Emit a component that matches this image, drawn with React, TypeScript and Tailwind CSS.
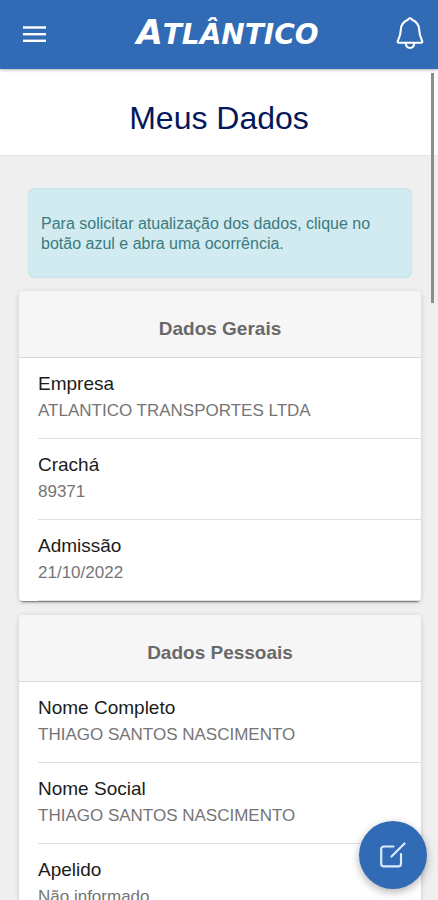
type Field = {
  label: string;
  value: string;
};

const generalData: Field[] = [
  { label: "Empresa", value: "ATLANTICO TRANSPORTES LTDA" },
  { label: "Crachá", value: "89371" },
  { label: "Admissão", value: "21/10/2022" },
];

const personalData: Field[] = [
  { label: "Nome Completo", value: "THIAGO SANTOS NASCIMENTO" },
  { label: "Nome Social", value: "THIAGO SANTOS NASCIMENTO" },
  { label: "Apelido", value: "Não informado" },
];

export default function App() {
  return (
    <div className="relative flex h-screen flex-col overflow-hidden bg-[#efefef] font-['Liberation_Sans',Arial,sans-serif]">
      <Header />

      <main className="min-h-0 flex-1 overflow-y-auto [scrollbar-width:none]">
        <div className="border-b border-[#e4e4e4] bg-white pt-[27px] pb-[15px]">
          <h1 className="text-center text-[32px] leading-[44px] text-[#04185c]">Meus Dados</h1>
        </div>

        <div className="pt-8 pr-[17px] pb-24 pl-[19px]">
          <p
            className="mx-[9px] rounded-md border border-[#c4e7ea] bg-[#d1ebf0] px-3 pt-[25px] pb-[23px] text-base leading-5 text-[#3c7a80]"
            role="status"
          >
            Para solicitar atualização dos dados, clique no botão azul e abra uma ocorrência.
          </p>

          <div className="mt-[13px] space-y-[14px]">
            <DataCard fields={generalData} title="Dados Gerais" />
            <DataCard fields={personalData} title="Dados Pessoais" />
          </div>
        </div>
      </main>

      {/* scroll indicator */}
      <div className="absolute top-[73px] right-1 h-[230px] w-[3px] bg-[#8c8c8c]" />

      <button
        aria-label="Abrir ocorrência"
        className="absolute right-[11px] bottom-[11px] flex size-[68px] items-center justify-center rounded-full bg-[#316ab5] text-[#dceaff] shadow-[0_3px_8px_rgba(0,0,0,0.3)]"
        type="button"
      >
        <EditIcon />
      </button>
    </div>
  );
}

function Header() {
  return (
    <header className="z-10 flex h-[69px] shrink-0 items-center justify-between bg-[#316ab5] pr-[14px] pl-[23px] text-white shadow-[0_1px_3px_rgba(0,0,0,0.3)]">
      <button aria-label="Menu" className="flex w-9 items-center" type="button">
        <svg fill="currentColor" height="17" viewBox="0 0 24 17" width="24">
          <rect height="2.4" width="23" y="0.3" />
          <rect height="2.4" width="23" y="7" />
          <rect height="2.4" width="23" y="13.6" />
        </svg>
      </button>
      <span className="pb-0.5 font-['DejaVu_Sans',Verdana,sans-serif] text-[28px] leading-8 font-bold italic">
        <span className="text-[34px]">A</span>TLÂNTICO
      </span>
      <button aria-label="Notificações" className="pb-1" type="button">
        <BellIcon />
      </button>
    </header>
  );
}

function BellIcon() {
  return (
    <svg fill="none" height="34" stroke="currentColor" strokeLinejoin="round" strokeWidth="2.1" viewBox="0 0 28 34" width="28">
      <path d="M14 2.2c-1 0-1.600.5-2.100 1.500C8 5.500 5.200 8.500 4.900 13c-.3 5.500-.8 7.500-2.700 11-.9 1.400-.7 2.700.8 2.700h22c1.500 0 1.700-1.300.8-2.700-1.900-3.500-2.400-5.500-2.700-11-.3-4.500-3.100-7.500-7-9.300-.5-1-1.100-1.500-2.100-1.500z" />
      <path d="M9.700 27c.3 3.200 1.900 5 4.300 5s4-1.800 4.300-5" />
    </svg>
  );
}

function EditIcon() {
  return (
    <svg fill="none" height="28" stroke="currentColor" strokeLinecap="round" strokeLinejoin="round" strokeWidth="2.2" viewBox="0 0 28 28" width="28">
      <path d="M14.500 5.500H4.800A2.600 2.600 0 0 0 2.200 8.100v14.600a2.600 2.600 0 0 0 2.600 2.600h14.600a2.600 2.600 0 0 0 2.600-2.600V13" />
      <path d="M12.500 15.500 25.500 2.500" />
    </svg>
  );
}

type DataCardProps = {
  title: string;
  fields: Field[];
};

function DataCard({ title, fields }: DataCardProps) {
  return (
    <section className="overflow-hidden rounded-sm bg-white shadow-[0_3px_2px_-2px_rgba(0,0,0,0.5),0_1px_5px_rgba(0,0,0,0.16)]">
      <h2 className="border-b border-[#d8d8d8] bg-[#f6f6f6] pt-6 pb-[14px] text-center text-[19px] leading-7 font-bold text-[#696969]">
        {title}
      </h2>
      <dl className="pl-[19px]">
        {fields.map((field) => (
          <div className="border-b border-[#dedede] pt-3 pb-[14px] leading-[27px]" key={field.label}>
            <dt className="text-[19px] text-[#1c1c1c]">{field.label}</dt>
            <dd className="text-[17px] text-[#757575]">{field.value}</dd>
          </div>
        ))}
      </dl>
    </section>
  );
}
